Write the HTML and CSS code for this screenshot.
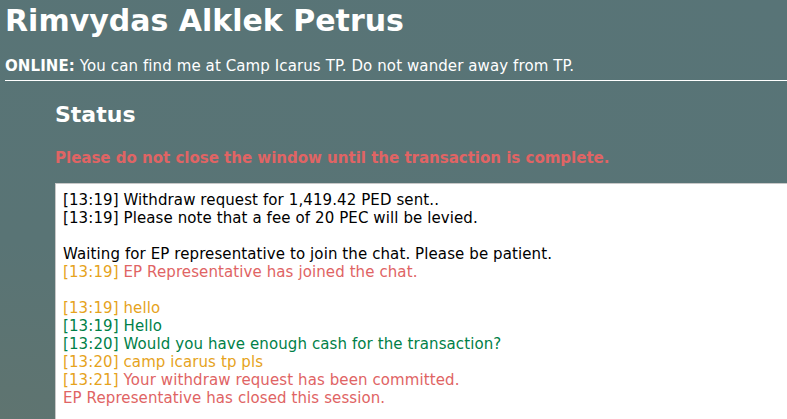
FILE: index.html
```html
<!DOCTYPE html>
<html lang="en">
<head>
    <meta charset="UTF-8">
    <meta name="viewport" content="width=device-width, initial-scale=1.0">
    <title>Rimvydas Alklek Petrus</title>
    <link rel="stylesheet" href="styles.css">
</head>
<body>
    <header>
        <h1>Rimvydas Alklek Petrus</h1>
        <p class="presence"><b>ONLINE:</b> You can find me at Camp Icarus TP. Do not wander away from TP.</p>
    </header>
    <hr>
    <div class="status">
        <h2>Status</h2>
        <p class="warning">Please do not close the window until the transaction is complete.</p>
        <div class="log">
            <div>[13:19] Withdraw request for 1,419.42 PED sent..</div>
            <div>[13:19] Please note that a fee of 20 PEC will be levied.</div>
            <div class="blank"></div>
            <div>Waiting for EP representative to join the chat. Please be patient.</div>
            <div class="sys"><span class="time">[13:19]</span> EP Representative has joined the chat.</div>
            <div class="blank"></div>
            <div class="me">[13:19] hello</div>
            <div class="rep">[13:19] Hello</div>
            <div class="rep">[13:20] Would you have enough cash for the transaction?</div>
            <div class="me">[13:20] camp icarus tp pls</div>
            <div class="sys"><span class="time">[13:21]</span> Your withdraw request has been committed.</div>
            <div class="sys">EP Representative has closed this session.</div>
        </div>
    </div>
</body>
</html>
```

FILE: styles.css
```css
/* CSS styles */
html, body {
    overflow: hidden;
}
body {
    font-family: "DejaVu Sans", Verdana, sans-serif;
    font-size: 15px;
    margin: 0;
    padding: 0 0 0 5px;
    height: 419px;
    color: #fff;
    background: radial-gradient(ellipse at 0% 100%, #5f7470 0%, #597475 30%, #587477 100%);
}
header h1 {
    margin: 0;
    padding-top: 3px;
    font-size: 30px;
    line-height: 36px;
}
.presence {
    margin: 18px 0 0;
    line-height: 18px;
    letter-spacing: 0.1px;
}
hr {
    margin: 5px 0 0;
    border: none;
    border-top: 1px solid #fff;
    height: 0;
}
.status {
    margin-left: 50px;
}
.status h2 {
    margin: 20px 0 0;
    font-size: 22px;
    line-height: 28px;
}
.warning {
    margin: 20px 0 0;
    color: #e06464;
    font-weight: bold;
    line-height: 18px;
}
.log {
    margin: 16px -20px 0 0;
    background: #fff;
    border: 1px solid #c8c8c8;
    border-right: none;
    padding: 7px 7px 0;
    height: 230px;
    color: #000;
    line-height: 18px;
    letter-spacing: 0.1px;
}
.blank {
    height: 18px;
}
.time, .me {
    color: #e6a31c;
}
.sys {
    color: #e06464;
}
.rep {
    color: #007f48;
}
```
